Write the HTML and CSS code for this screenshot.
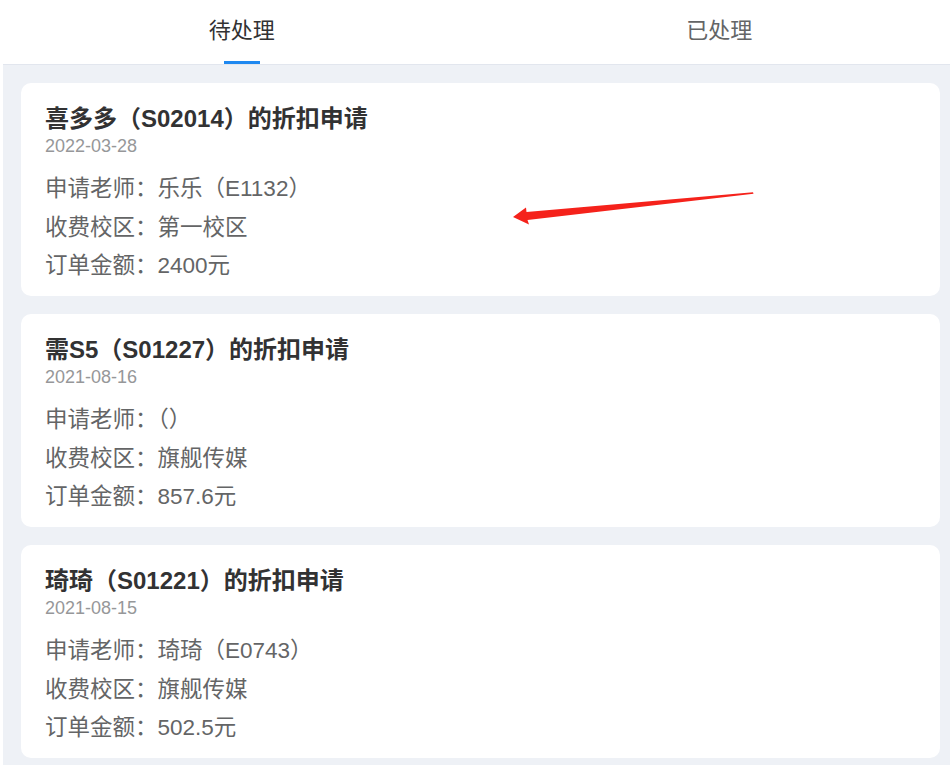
FILE: index.html
```html
<!DOCTYPE html>
<html lang="zh-CN">
<head>
<meta charset="utf-8">
<title>折扣申请</title>
<link rel="stylesheet" href="styles.css">
</head>
<body>
<div class="page">
  <div class="tabs">
    <div class="tab active">待处理</div>
    <div class="tab">已处理</div>
  </div>
  <div class="list">
    <div class="card">
      <div class="title">喜多多（S02014）的折扣申请</div>
      <div class="date">2022-03-28</div>
      <div class="info">
        <div class="row">申请老师：乐乐（E1132）</div>
        <div class="row">收费校区：第一校区</div>
        <div class="row">订单金额：2400元</div>
      </div>
    </div>
    <div class="card">
      <div class="title">需S5（S01227）的折扣申请</div>
      <div class="date">2021-08-16</div>
      <div class="info">
        <div class="row">申请老师：（）</div>
        <div class="row">收费校区：旗舰传媒</div>
        <div class="row">订单金额：857.6元</div>
      </div>
    </div>
    <div class="card">
      <div class="title">琦琦（S01221）的折扣申请</div>
      <div class="date">2021-08-15</div>
      <div class="info">
        <div class="row">申请老师：琦琦（E0743）</div>
        <div class="row">收费校区：旗舰传媒</div>
        <div class="row">订单金额：502.5元</div>
      </div>
    </div>
  </div>
</div>
<svg class="arrow" width="950" height="765" viewBox="0 0 950 765" aria-hidden="true">
  <polygon points="513,217 526,207.5 526.5,212 753,192.2 753.5,193.8 527.5,220 529,224.5" fill="#f5221b"/>
</svg>
</body>
</html>
```

FILE: styles.css
```css
html, body {
  margin: 0;
  padding: 0;
  background: #ffffff;
  overflow: hidden;
}

body {
  width: 950px;
  height: 765px;
  position: relative;
  font-family: "Liberation Sans", "Noto Sans CJK SC", sans-serif;
}

.page {
  margin-left: 3px;
  width: 955px;
  background: #eef1f6;
  min-height: 765px;
}

.tabs {
  display: flex;
  height: 64px;
  background: #ffffff;
  border-bottom: 1px solid #e2e6ee;
}

.tab {
  flex: 1;
  position: relative;
  text-align: center;
  font-size: 22px;
  line-height: 62px;
  color: #646566;
}

.tab.active {
  color: #323233;
}

.tab.active::after {
  content: "";
  position: absolute;
  left: 50%;
  bottom: 0;
  width: 36px;
  height: 3px;
  margin-left: -18px;
  background: #1e88f0;
}

.list {
  display: flex;
  flex-direction: column;
  gap: 18px;
  padding: 18px 18px 20px;
}

.card {
  background: #ffffff;
  border-radius: 10px;
  padding: 21px 24px 10.5px;
}

.title {
  font-size: 24px;
  font-weight: 700;
  line-height: 30px;
  color: #323233;
}

.date {
  font-size: 18px;
  line-height: 24px;
  color: #969799;
}

.info {
  margin-top: 12px;
}

.row {
  font-size: 22.5px;
  line-height: 38.5px;
  color: #646566;
}

.arrow {
  position: absolute;
  left: 0;
  top: 0;
  pointer-events: none;
}
```
